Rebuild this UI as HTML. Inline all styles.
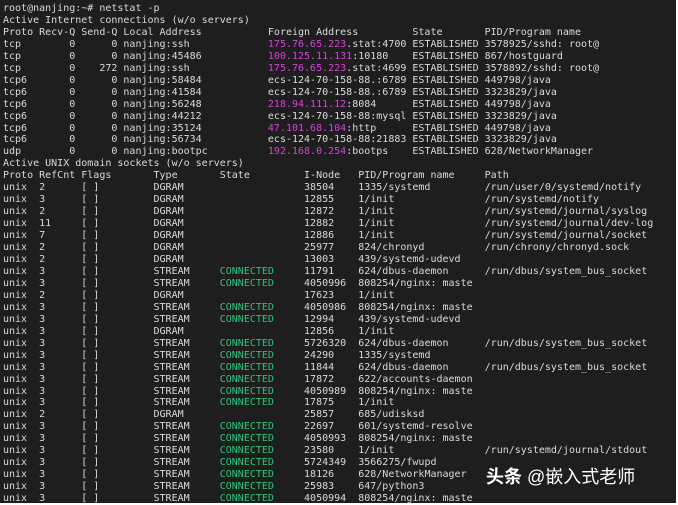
<!DOCTYPE html>
<html><head><meta charset="utf-8"><style>
html,body{margin:0;padding:0;background:#fff;}
#t{position:absolute;left:0;top:0;width:676px;height:503px;background:#1e1e1e;overflow:hidden;}
pre{margin:0;padding:3px 0 0 3px;font-family:"DejaVu Sans Mono","Liberation Mono",monospace;font-size:10px;line-height:11.95px;color:#dadada;white-space:pre;}
.m{color:#d742d7}.g{color:#2fc47a}
#w{position:absolute;left:486px;top:463px;font-family:"Liberation Sans","Noto Sans CJK SC",sans-serif;font-size:18px;color:#fff;white-space:nowrap;}
</style></head><body><div id="t"><pre>root@nanjing:~# netstat -p
Active Internet connections (w/o servers)
Proto Recv-Q Send-Q Local Address           Foreign Address         State       PID/Program name
tcp        0      0 nanjing:ssh             <span class="m">175.76.65.223</span>.stat:4700 ESTABLISHED 3578925/sshd: root@
tcp        0      0 nanjing:45486           <span class="m">100.125.11.131</span>:10180    ESTABLISHED 867/hostguard
tcp        0    272 nanjing:ssh             <span class="m">175.76.65.223</span>.stat:4699 ESTABLISHED 3578892/sshd: root@
tcp6       0      0 nanjing:58484           ecs-124-70-158-88.:6789 ESTABLISHED 449798/java
tcp6       0      0 nanjing:41584           ecs-124-70-158-88.:6789 ESTABLISHED 3323829/java
tcp6       0      0 nanjing:56248           <span class="m">218.94.111.12</span>:8084      ESTABLISHED 449798/java
tcp6       0      0 nanjing:44212           ecs-124-70-158-88:mysql ESTABLISHED 3323829/java
tcp6       0      0 nanjing:35124           <span class="m">47.101.68.104</span>:http      ESTABLISHED 449798/java
tcp6       0      0 nanjing:56734           ecs-124-70-158-88:21883 ESTABLISHED 3323829/java
udp        0      0 nanjing:bootpc          <span class="m">192.168.0.254</span>:bootps    ESTABLISHED 628/NetworkManager
Active UNIX domain sockets (w/o servers)
Proto RefCnt Flags       Type       State         I-Node   PID/Program name     Path
unix  2      [ ]         DGRAM                    38504    1335/systemd         /run/user/0/systemd/notify
unix  3      [ ]         DGRAM                    12855    1/init               /run/systemd/notify
unix  2      [ ]         DGRAM                    12872    1/init               /run/systemd/journal/syslog
unix  11     [ ]         DGRAM                    12882    1/init               /run/systemd/journal/dev-log
unix  7      [ ]         DGRAM                    12886    1/init               /run/systemd/journal/socket
unix  2      [ ]         DGRAM                    25977    824/chronyd          /run/chrony/chronyd.sock
unix  2      [ ]         DGRAM                    13003    439/systemd-udevd
unix  3      [ ]         STREAM     <span class="g">CONNECTED</span>     11791    624/dbus-daemon      /run/dbus/system_bus_socket
unix  3      [ ]         STREAM     <span class="g">CONNECTED</span>     4050996  808254/nginx: maste
unix  2      [ ]         DGRAM                    17623    1/init
unix  3      [ ]         STREAM     <span class="g">CONNECTED</span>     4050986  808254/nginx: maste
unix  3      [ ]         STREAM     <span class="g">CONNECTED</span>     12994    439/systemd-udevd
unix  3      [ ]         DGRAM                    12856    1/init
unix  3      [ ]         STREAM     <span class="g">CONNECTED</span>     5726320  624/dbus-daemon      /run/dbus/system_bus_socket
unix  3      [ ]         STREAM     <span class="g">CONNECTED</span>     24290    1335/systemd
unix  3      [ ]         STREAM     <span class="g">CONNECTED</span>     11844    624/dbus-daemon      /run/dbus/system_bus_socket
unix  3      [ ]         STREAM     <span class="g">CONNECTED</span>     17872    622/accounts-daemon
unix  3      [ ]         STREAM     <span class="g">CONNECTED</span>     4050989  808254/nginx: maste
unix  3      [ ]         STREAM     <span class="g">CONNECTED</span>     17875    1/init
unix  2      [ ]         DGRAM                    25857    685/udisksd
unix  3      [ ]         STREAM     <span class="g">CONNECTED</span>     22697    601/systemd-resolve
unix  3      [ ]         STREAM     <span class="g">CONNECTED</span>     4050993  808254/nginx: maste
unix  3      [ ]         STREAM     <span class="g">CONNECTED</span>     23580    1/init               /run/systemd/journal/stdout
unix  3      [ ]         STREAM     <span class="g">CONNECTED</span>     5724349  3566275/fwupd
unix  3      [ ]         STREAM     <span class="g">CONNECTED</span>     18126    628/NetworkManager
unix  3      [ ]         STREAM     <span class="g">CONNECTED</span>     25983    647/python3
unix  3      [ ]         STREAM     <span class="g">CONNECTED</span>     4050994  808254/nginx: maste</pre>
<div id="w"><b>头条</b> @嵌入式老师</div>
</div></body></html>
